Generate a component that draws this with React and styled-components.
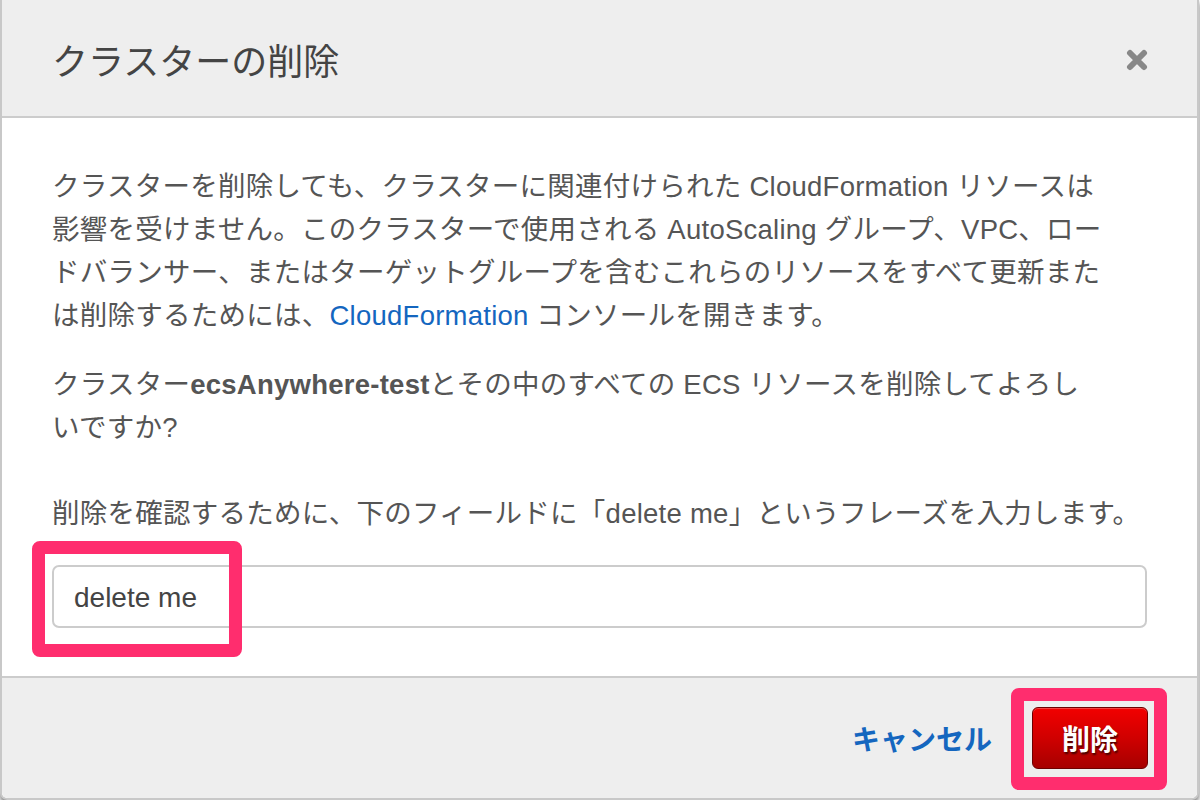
import React from "react";
import styled, { createGlobalStyle } from "styled-components";

const GlobalStyle = createGlobalStyle`
  html, body {
    margin: 0;
    padding: 0;
    background: #ffffff;
  }
  body {
    font-family: "Liberation Sans", "Noto Sans CJK JP", sans-serif;
  }
`;

const Modal = styled.div`
  width: 1199px;
  box-sizing: border-box;
  border: 2px solid #c8c8c8;
  border-top: none;
  border-radius: 0 0 7px 7px;
  background: #fff;
  box-shadow: 0 3px 5px rgba(0, 0, 0, 0.55);
`;

const Header = styled.div`
  height: 116px;
  display: flex;
  align-items: center;
  justify-content: space-between;
  padding: 0 48px 0 50px;
  background: #eeeeee;
  border-bottom: 2px solid #cccccc;
`;

const Title = styled.h4`
  margin: 0;
  padding-top: 2px;
  font-size: 36px;
  font-weight: 400;
  color: #444444;
`;

const CloseButton = styled.button`
  border: none;
  background: none;
  padding: 0;
  width: 24px;
  height: 24px;
  display: flex;
  align-items: center;
  justify-content: center;
  cursor: pointer;
  margin-top: 4px;
`;

const Body = styled.div`
  padding: 47px 50px 48px;
`;

const Paragraph = styled.p`
  margin: 0 0 ${({ $gap }) => $gap}px;
  font-size: 27.5px;
  letter-spacing: 0.25px;
  line-height: 43px;
  color: #555555;
`;

const Link = styled.a`
  color: #1466bf;
  text-decoration: none;
`;

const Strong = styled.b`
  font-weight: 700;
  color: #555555;
`;

const FieldWrap = styled.div`
  position: relative;
`;

const Input = styled.input`
  display: block;
  width: 100%;
  box-sizing: border-box;
  height: 63px;
  border: 2px solid #cccccc;
  border-radius: 7px;
  padding: 2px 20px 0;
  font-family: "Liberation Sans", "Noto Sans CJK JP", sans-serif;
  font-size: 28px;
  color: #444444;
  background: #fff;
  outline: none;
`;

const Highlight = styled.div`
  position: absolute;
  left: ${({ $left }) => $left}px;
  top: ${({ $top }) => $top}px;
  width: ${({ $w }) => $w}px;
  height: ${({ $h }) => $h}px;
  box-sizing: border-box;
  border: 13px solid #ff2d6e;
  border-radius: 8px;
  pointer-events: none;
`;

const Footer = styled.div`
  height: 120px;
  display: flex;
  align-items: center;
  justify-content: flex-end;
  gap: 40px;
  padding: 0 49px 0 50px;
  background: #eeeeee;
  border-top: 2px solid #cccccc;
  border-radius: 0 0 6px 6px;
`;

const CancelLink = styled.a`
  font-size: 28px;
  font-weight: 700;
  color: #1466bf;
  text-decoration: none;
  cursor: pointer;
`;

const ButtonWrap = styled.div`
  position: relative;
`;

const DangerButton = styled.button`
  width: 116px;
  height: 62px;
  border: 1px solid #6e0000;
  border-radius: 6px;
  background: linear-gradient(to bottom, #f20000 0%, #d00000 50%, #a60000 100%);
  box-shadow: inset 0 1px 0 rgba(255, 255, 255, 0.25);
  color: #ffffff;
  font-family: "Liberation Sans", "Noto Sans CJK JP", sans-serif;
  font-size: 28px;
  font-weight: 700;
  text-shadow: 1px 2px 2px rgba(0, 0, 0, 0.65);
  cursor: pointer;
`;

const CloseIcon = () => (
  <svg width="22" height="22" viewBox="0 0 22 22">
    <path
      d="M4 4 L18 18 M18 4 L4 18"
      stroke="#888888"
      strokeWidth="6"
      strokeLinecap="round"
    />
  </svg>
);

export default function App() {
  return (
    <>
      <GlobalStyle />
      <Modal>
        <Header>
          <Title>クラスターの削除</Title>
          <CloseButton aria-label="close">
            <CloseIcon />
          </CloseButton>
        </Header>
        <Body>
          <Paragraph $gap={26}>
            クラスターを削除しても、クラスターに関連付けられた CloudFormation リソースは
            <br />
            影響を受けません。このクラスターで使用される AutoScaling グループ、VPC、ロー
            <br />
            ドバランサー、またはターゲットグループを含むこれらのリソースをすべて更新また
            <br />
            は削除するためには、<Link href="#">CloudFormation</Link> コンソールを開きます。
          </Paragraph>
          <Paragraph $gap={43}>
            クラスター<Strong>ecsAnywhere-test</Strong>とその中のすべての ECS リソースを削除してよろし
            <br />
            いですか?
          </Paragraph>
          <Paragraph $gap={30}>
            削除を確認するために、下のフィールドに「delete me」というフレーズを入力します。
          </Paragraph>
          <FieldWrap>
            <Input defaultValue="delete me" />
            <Highlight $left={-20} $top={-24} $w={210} $h={116} />
          </FieldWrap>
        </Body>
        <Footer>
          <CancelLink>キャンセル</CancelLink>
          <ButtonWrap>
            <DangerButton>削除</DangerButton>
            <Highlight $left={-21} $top={-19} $w={156} $h={102} />
          </ButtonWrap>
        </Footer>
      </Modal>
    </>
  );
}
